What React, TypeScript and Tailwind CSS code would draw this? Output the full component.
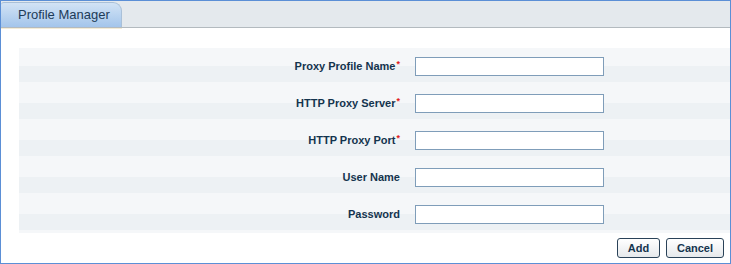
const FIELDS = [
  { label: "Proxy Profile Name", required: true, type: "text" },
  { label: "HTTP Proxy Server", required: true, type: "text" },
  { label: "HTTP Proxy Port", required: true, type: "text" },
  { label: "User Name", required: false, type: "text" },
  { label: "Password", required: false, type: "password" },
];

function FieldRow({ label, required, type }: (typeof FIELDS)[0]) {
  return (
    <div className="relative flex h-[37px] items-center bg-[#f5f7f9]">
      <div className="absolute left-0 right-0 top-[18px] h-[16px] bg-[#edf1f4]" />
      <label className="relative w-[382px] pr-px text-right text-[11px] font-bold leading-none text-[#14344e]">
        {label}
        {required && <span className="relative -top-[3px] ml-px text-[9px] text-[#e02020]">*</span>}
      </label>
      <input
        type={type}
        className="relative ml-[14px] h-[19px] w-[189px] border border-[#7f9db9] bg-white px-1 text-[11px] outline-none"
      />
    </div>
  );
}

export default function App() {
  return (
    <div className="flex h-[264px] w-[731px] flex-col border border-[#5b8fd6] bg-white font-['Liberation_Sans',Arial,sans-serif]">
      <div className="flex h-[27px] items-end border-b border-[#b3babf] bg-[#e4e9ed]">
        <div className="relative flex h-[25px] w-[121px] items-center rounded-tr-[9px] rounded-tl-[3px] border-r border-t border-[#a9c0d8] bg-gradient-to-b from-[#d2e3f5] to-[#a3c5eb] pl-[17px] text-[13px] text-[#1d3b58]">
          Profile Manager
        </div>
      </div>
      <div className="h-px w-[121px] bg-[#f3ecd6]" />
      <div className="flex flex-1 flex-col pl-[18px] pt-[19px]">
        {FIELDS.map((f) => (
          <FieldRow key={f.label} {...f} />
        ))}
        <div className="flex flex-1 items-center justify-end gap-[6px] pr-[6px]">
          <button
            type="button"
            className="h-[20px] w-[43px] rounded-[3px] border border-[#2a4258] bg-gradient-to-b from-white to-[#e6e9ec] text-[11px] font-bold text-[#14344e]"
          >
            Add
          </button>
          <button
            type="button"
            className="h-[20px] w-[58px] rounded-[3px] border border-[#2a4258] bg-gradient-to-b from-white to-[#e6e9ec] text-[11px] font-bold text-[#14344e]"
          >
            Cancel
          </button>
        </div>
      </div>
    </div>
  );
}
